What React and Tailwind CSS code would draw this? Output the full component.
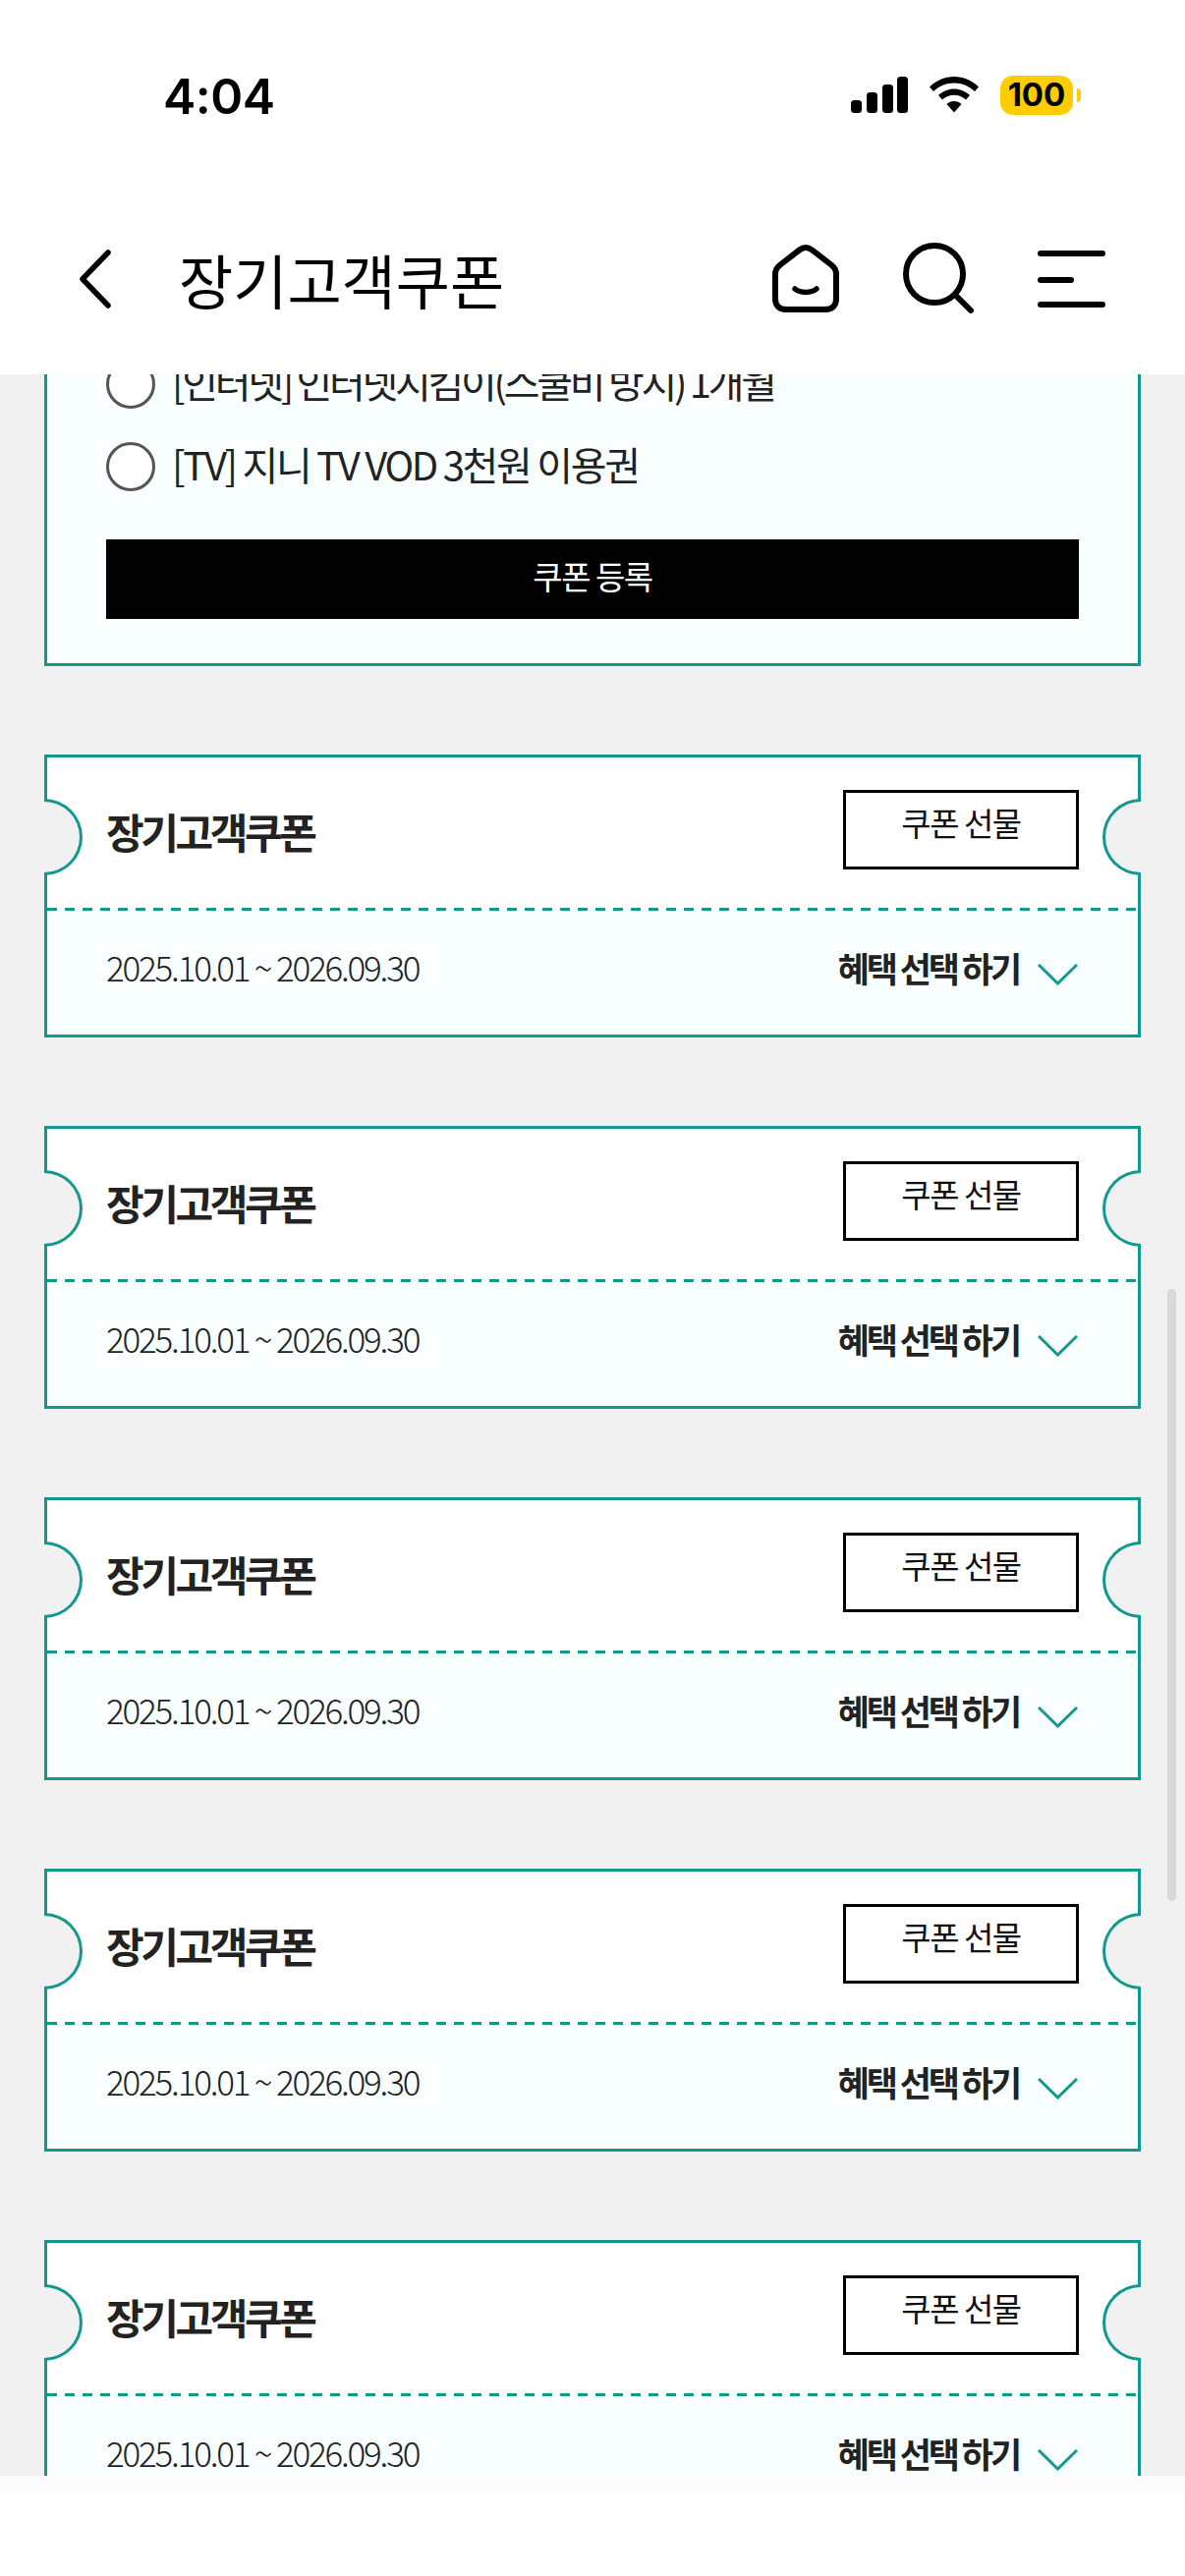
const cards = [0, 1, 2, 3, 4];

function StatusBar() {
  return (
    <div className="flex h-[136px] items-start justify-between pl-[166px] pr-[106px] pt-[73px]">
      <span className="font-['Inter',sans-serif] text-[50px] leading-[50px] font-semibold tracking-[-0.5px] text-black">4:04</span>
      <div className="flex items-center gap-[22px] pt-[4px]">
        <svg width="58" height="38" viewBox="0 0 58 38" className="fill-black">
          <rect x="0" y="24" width="11" height="13" rx="3.5" />
          <rect x="16" y="16" width="11" height="21" rx="3.5" />
          <rect x="32" y="8" width="11" height="29" rx="3.5" />
          <rect x="47" y="0" width="11" height="37" rx="3.5" />
        </svg>
        <svg width="50" height="38" viewBox="0 0 50 38" className="fill-black">
          <path d="M25 0C15.500 0 7 3.800 0 10.500L4 15C9.500 9.600 17 6.400 25 6.400C33 6.400 40.500 9.600 46 15L50 10.500C43 3.800 34.500 0 25 0Z" />
          <path d="M25 12.500C19 12.500 13.500 15 9 19L13 23.500C16.200 20.500 20.500 18.800 25 18.800C29.500 18.800 33.800 20.500 37 23.500L41 19C36.500 15 31 12.500 25 12.500Z" />
          <path d="M25 25C22 25 19.500 26 17.500 28L25 36.500L32.500 28C30.500 26 28 25 25 25Z" />
        </svg>
        <div className="flex items-center gap-[4px]">
          <div className="flex h-[40px] w-[74px] items-center justify-center rounded-[13px] bg-[#ffcc00] font-['Inter',sans-serif] text-[33px] font-bold text-black">
            100
          </div>
          <div className="h-[14px] w-[4px] rounded-r-full bg-[#ffcc00]"></div>
        </div>
      </div>
    </div>
  );
}

function NavBar() {
  return (
    <div className="flex h-[245px] items-start pt-[105px]">
      <svg width="36" height="60" viewBox="0 0 36 60" fill="none" stroke="black" strokeWidth="5.500" strokeLinecap="round" strokeLinejoin="round" className="ml-[79px] mt-[13px]">
        <path d="M31 3L5 30L31 57" />
      </svg>
      <h1 className="ml-[67px] mt-[5px] text-[60px] leading-[76px] font-normal text-black">장기고객쿠폰</h1>
      <div className="ml-auto mr-[81px] flex items-start">
        <svg width="72" height="72" viewBox="0 0 72 72" fill="none" stroke="black" strokeWidth="6" className="mt-[7px]">
          <path d="M36 4C33.500 4 31.500 5 29.500 6.500L9.500 22C6.500 24.500 5 27 5 31V56C5 63 9 67 16 67H56C63 67 67 63 67 56V31C67 27 65.500 24.500 62.500 22L42.500 6.500C40.500 5 38.500 4 36 4Z" strokeLinejoin="round" />
          <path d="M25 46C30 50.500 42 50.500 47 46" strokeLinecap="round" strokeWidth="5.500" />
        </svg>
        <svg width="76" height="76" viewBox="0 0 76 76" fill="none" stroke="black" strokeWidth="6" className="ml-[60px] mt-[3px]">
          <circle cx="35" cy="35" r="29" />
          <path d="M57 57L72 72" strokeLinecap="round" />
        </svg>
        <svg width="69" height="58" viewBox="0 0 69 58" className="ml-[64px] mt-[14px] fill-black">
          <rect x="0" y="0" width="69" height="6" rx="3" />
          <rect x="0" y="27" width="37" height="6" rx="3" />
          <rect x="0" y="52" width="69" height="6" rx="3" />
        </svg>
      </div>
    </div>
  );
}

function Radio({ label, tight }) {
  return (
    <label className="flex h-[50px] items-center gap-[17px]">
      <span className="h-[50px] w-[50px] shrink-0 rounded-full border-[3px] border-[#555] bg-white"></span>
      <span className={tight ? "mb-[6px] text-[40px] leading-[44px] tracking-[-3.3px] text-[#222]" : "mb-[6px] text-[40px] leading-[44px] tracking-[-2.3px] text-[#222]"}>{label}</span>
    </label>
  );
}

function SelectedCard() {
  return (
    <section className="mx-[45px] mt-[-18px] flex flex-col border-[3px] border-[#12998e] bg-[#f8fffe] px-[60px] pb-[45px]">
      <div className="flex flex-col gap-[34px]">
        <Radio tight label="[인터넷] 인터넷지킴이(스쿨비 방지) 1개월" />
        <Radio label="[TV] 지니 TV VOD 3천원 이용권" />
      </div>
      <button className="mt-[49px] h-[81px] bg-black pb-[6px] text-[33px] tracking-[-1.5px] text-white">쿠폰 등록</button>
    </section>
  );
}

function Notch({ side }) {
  if (side === "left") {
    return <div className="absolute left-[-3px] top-[42px] h-[78px] w-[39px] rounded-r-full border-y-[3px] border-r-[3px] border-[#12998e] bg-[#f1f1f1]"></div>;
  }
  return <div className="absolute right-[-3px] top-[42px] h-[78px] w-[39px] rounded-l-full border-y-[3px] border-l-[3px] border-[#12998e] bg-[#f1f1f1]"></div>;
}

function CouponCard() {
  return (
    <section className="mx-[45px] mt-[90px] border-[3px] border-[#12998e] bg-white">
      <div className="relative flex h-[153px] items-center justify-between px-[60px]">
        <Notch side="left" />
        <h2 className="mb-[4px] text-[42px] leading-[56px] font-bold tracking-[-3.4px] text-[#222]">장기고객쿠폰</h2>
        <button className="mb-[6px] h-[81px] w-[240px] border-[3px] border-black bg-white pb-[13px] text-[33px] tracking-[-1.5px] text-[#111]">쿠폰 선물</button>
        <Notch side="right" />
      </div>
      {/* dashes are longer than a css dashed border gives */}
      <div className="h-[3px] bg-[#f8fffe] bg-[repeating-linear-gradient(90deg,#12998e_0_10px,transparent_10px_18px)]"></div>
      <div className="flex h-[126px] items-center justify-between bg-[#f8fffe] pl-[60px] pr-[61px]">
        <span className="mb-[12px] text-[35px] leading-[44px] font-light tracking-[-2.2px] text-[#222]">2025.10.01 ~ 2026.09.30</span>
        <button className="flex items-center gap-[19px]">
          <span className="mb-[10px] text-[35px] leading-[44px] font-bold tracking-[-3.1px] text-[#222]">혜택 선택 하기</span>
          <svg width="41" height="22" viewBox="0 0 41 22" fill="none" stroke="#12998e" strokeWidth="3" className="mt-[4px]">
            <path d="M1 1L20.500 20L40 1" />
          </svg>
        </button>
      </div>
    </section>
  );
}

export default function App() {
  return (
    <div className="relative flex h-[2622px] w-[1206px] flex-col overflow-hidden bg-white font-['Noto_Sans_CJK_KR',sans-serif]">
      <header className="relative z-10 bg-white">
        <StatusBar />
        <NavBar />
      </header>
      <main className="h-[2139px] overflow-hidden bg-[#f1f1f1]">
        <SelectedCard />
        {cards.map((c) => (
          <CouponCard key={c} />
        ))}
      </main>
      <div className="h-[24px] bg-gradient-to-b from-[#fafafa] to-white"></div>
      <div className="absolute left-[1188px] top-[1312px] h-[623px] w-[9px] rounded-full bg-[#d8d8d8]"></div>
    </div>
  );
}
